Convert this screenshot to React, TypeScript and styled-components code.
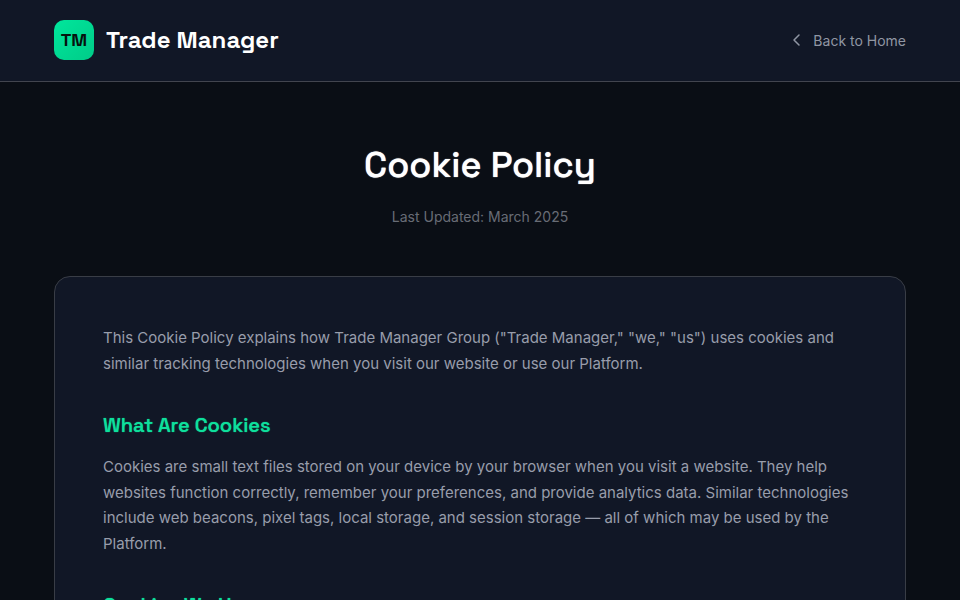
import React from "react";
import styled, { createGlobalStyle } from "styled-components";

const GlobalStyle = createGlobalStyle`
  *, *::before, *::after { box-sizing: border-box; }
  html { background: #0a0e15; scrollbar-width: none; }
  body {
    margin: 0;
    background: #0a0e15;
    color: #ffffff;
    font-family: Inter, "Liberation Sans", sans-serif;
    line-height: 1.7;
  }
`;

const display = `"Space Grotesk", Inter, "Liberation Sans", sans-serif`;

const Container = styled.div`
  max-width: 900px;
  margin: 0 auto;
  padding: 0 24px;
`;

const Header = styled.header`
  padding: 20px 0;
  background: #111726;
  border-bottom: 1px solid #42454f;
`;

const HeaderRow = styled(Container)`
  display: flex;
  align-items: center;
  justify-content: space-between;
`;

const Brand = styled.a`
  display: flex;
  align-items: center;
  gap: 12px;
  color: #ffffff;
  text-decoration: none;
`;

const Mark = styled.span`
  display: flex;
  align-items: center;
  justify-content: center;
  width: 40px;
  height: 40px;
  border-radius: 10px;
  background: linear-gradient(135deg, #00e69c, #00cc88);
  color: #06120f;
  font-family: ${display};
  font-size: 18px;
  font-weight: 700;
`;

const BrandName = styled.span`
  font-family: ${display};
  font-size: 24px;
  font-weight: 700;
`;

const BackLink = styled.a`
  display: flex;
  align-items: center;
  gap: 8px;
  color: #9096a3;
  font-size: 14px;
  text-decoration: none;
`;

const Main = styled.main`
  padding: 60px 0;
`;

const TitleBlock = styled.div`
  margin-bottom: 48px;
  text-align: center;
`;

const Title = styled.h1`
  margin: 0 0 16px;
  font-family: ${display};
  font-size: 36px;
  font-weight: 500;
  line-height: 1.3;
  text-shadow: 0 0 1px currentColor;
`;

const Updated = styled.p`
  margin: 0;
  color: #686c75;
  font-size: 14px;
`;

const Card = styled.article`
  padding: 48px;
  background: #111726;
  border: 1px solid #393d46;
  border-radius: 16px;
`;

const Heading = styled.h2`
  margin: 36px 0 16px;
  color: #0ee09c;
  font-family: ${display};
  font-size: 20px;
  font-weight: 500;
  line-height: 1.3;
  text-shadow: 0 0 1px currentColor;
`;

const Paragraph = styled.p`
  margin: 0;
  color: #989dab;
  font-size: 15px;
`;

const BackIcon = () => (
  <svg width="16" height="16" viewBox="0 0 16 16" fill="none" stroke="currentColor" strokeWidth="1.5" strokeLinecap="round" strokeLinejoin="round" aria-hidden="true">
    <path d="M10 3 5 8l5 5" />
  </svg>
);

export default function App() {
  return (
    <>
      <GlobalStyle />
      <Header>
        <HeaderRow>
          <Brand href="#">
            <Mark>TM</Mark>
            <BrandName>Trade Manager</BrandName>
          </Brand>
          <BackLink href="#">
            <BackIcon />
            Back to Home
          </BackLink>
        </HeaderRow>
      </Header>
      <Main>
        <Container>
          <TitleBlock>
            <Title>Cookie Policy</Title>
            <Updated>Last Updated: March 2025</Updated>
          </TitleBlock>
          <Card>
            <Paragraph>
              This Cookie Policy explains how Trade Manager Group ("Trade Manager," "we," "us") uses cookies and
              similar tracking technologies when you visit our website or use our Platform.
            </Paragraph>
            <Heading>What Are Cookies</Heading>
            <Paragraph>
              Cookies are small text files stored on your device by your browser when you visit a website. They
              help websites function correctly, remember your preferences, and provide analytics data. Similar
              technologies include web beacons, pixel tags, local storage, and session storage — all of which may
              be used by the Platform.
            </Paragraph>
            <Heading>Cookies We Use</Heading>
          </Card>
        </Container>
      </Main>
    </>
  );
}
